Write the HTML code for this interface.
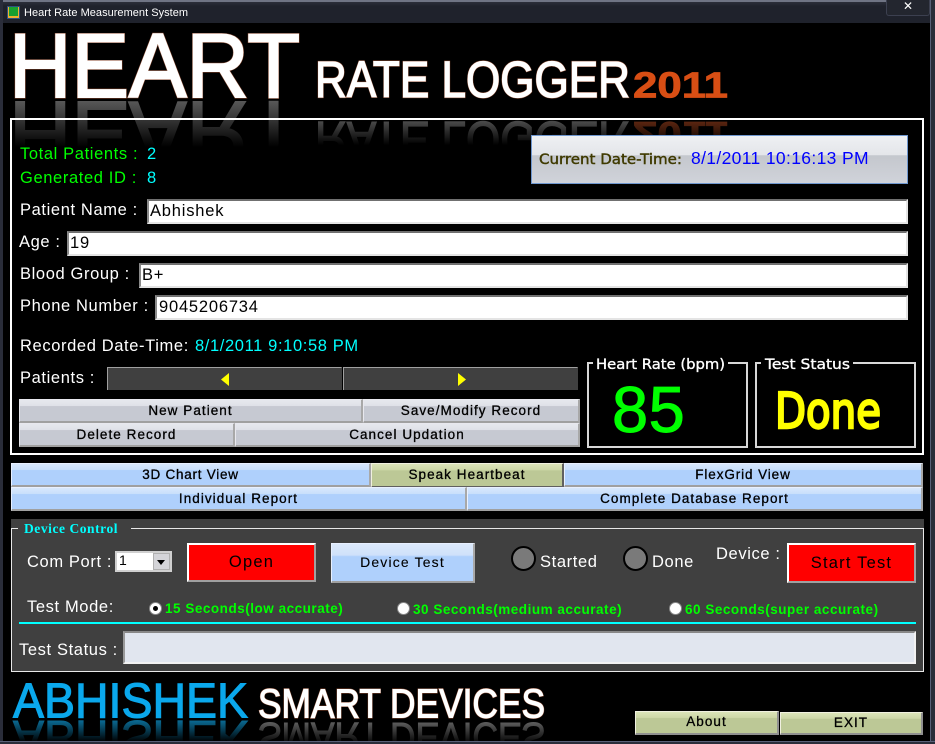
<!DOCTYPE html>
<html><head><meta charset="utf-8"><title>Heart Rate Measurement System</title>
<style>
html,body{margin:0;padding:0;background:#000}
#w{position:relative;width:935px;height:744px;overflow:hidden;background:#000;font-family:"Liberation Sans",sans-serif;font-size:16px}
#w div{position:absolute;box-sizing:border-box}
.l{color:#fff;white-space:nowrap;line-height:18px;height:18px;letter-spacing:.62px;font-size:16.5px;margin-top:1px}
.g{color:#00ff00}.c{color:#00ffff}
.i{background:#fff;border:2px solid #e4e4e4;border-top-color:#707070;border-left-color:#8a8a8a;color:#000;padding-left:1px;line-height:21px;letter-spacing:.8px;font-size:16.5px}
.b{text-align:center;color:#000;font-size:13.5px;line-height:21px;letter-spacing:1.05px;border:2px solid #fff;border-right-color:#909090;border-bottom-color:#909090;border-width:1px 2px 2px 1px;-webkit-text-stroke:.3px #000}
.s{background:linear-gradient(#e6e8ee 0,#dfe1e8 28%,#c6c9d2 30%,#c6c9d2 100%);border-color:#e8e8ee #a8a8a8 #a0a0a0 #e8e8ee}
.u{background:linear-gradient(#d8e8fc 0,#c8dffb 28%,#afd0fc 30%,#afd0fc 100%);border-color:#e8f0ff #a8a8a8 #a0a0a0 #e8f0ff}
.v{background:linear-gradient(#dbe4b8 0,#ccd6a6 28%,#bcc896 30%,#bcc896 100%);border-color:#f0f0e0 #909090 #909090 #f0f0e0}
.r{background:#ff0000;border:2px solid #fff;border-right-color:#a0a0a0;border-bottom-color:#a0a0a0;text-align:center;color:#000;letter-spacing:1.2px;line-height:34px;font-size:16.5px}
.n{background:#404040;border:2px solid #a0a0a0;border-right-color:#404040;border-bottom-color:#404040;border-width:1px 1px 0 1px}
.o{width:13px;height:13px;border-radius:50%;background:#fff;border:1px solid #888}
.t{color:#00ff00;font-size:13.5px;font-weight:bold;letter-spacing:.52px;white-space:nowrap;line-height:16px}
.d{width:25px;height:25px;border-radius:50%;background:#7a7a7a;border:2px solid #000}
svg{position:absolute;left:0;top:0}
</style></head><body><div id="w">
<!-- window chrome -->
<div style="left:0;top:0;width:935px;height:23px;background:linear-gradient(#2b2e3a,#1f222c 20%,#1f222c);border-top:2px solid #6f7484"></div>
<div style="left:0;top:0;width:3px;height:744px;background:#2a2d3a"></div>
<div style="left:930px;top:0;width:5px;height:744px;background:#2a2d3a;border-left:1px solid #596078"></div>
<div style="left:7px;top:6px;width:13px;height:13px;background:#f0b030;border:1px solid #305080"></div>
<div style="left:9px;top:7px;width:9px;height:9px;background:#18a030"></div>
<div style="left:24px;top:6px;color:#fff;font-size:11px;line-height:15px;letter-spacing:.03px;white-space:nowrap">Heart Rate Measurement System</div>
<div style="left:886px;top:0;width:44px;height:16px;background:#23262f;border:1px solid #3c4050;border-top:0;border-radius:0 0 3px 3px;color:#fff;font:bold 12px/12px 'DejaVu Sans',sans-serif;text-align:center">✕</div>

<!-- top logo -->
<svg width="935" height="200" viewBox="0 0 935 200" xmlns="http://www.w3.org/2000/svg" font-family="Liberation Sans, sans-serif">
<defs>
<linearGradient id="r1" gradientUnits="userSpaceOnUse" x1="0" y1="98" x2="0" y2="52"><stop offset="0" stop-color="#585858"/><stop offset="1" stop-color="#000"/></linearGradient>
<linearGradient id="r2" gradientUnits="userSpaceOnUse" x1="0" y1="98" x2="0" y2="75"><stop offset="0" stop-color="#484848"/><stop offset="1" stop-color="#000"/></linearGradient>
<linearGradient id="r3" gradientUnits="userSpaceOnUse" x1="0" y1="98" x2="0" y2="75"><stop offset="0" stop-color="#5a2510"/><stop offset="1" stop-color="#000"/></linearGradient>
</defs>
<g transform="translate(0,199) scale(1,-1)">
<text x="9" y="97" font-size="91" textLength="291" lengthAdjust="spacingAndGlyphs" fill="url(#r1)" stroke="url(#r1)" stroke-width="2">HEART</text>
</g>
<g transform="translate(0,220) scale(1,-1)">
<text x="315" y="98" font-size="51" textLength="315" lengthAdjust="spacingAndGlyphs" fill="url(#r2)" stroke="url(#r2)" stroke-width="1.4">RATE LOGGER</text>
<text x="633" y="98" font-size="36" font-weight="bold" textLength="95" lengthAdjust="spacingAndGlyphs" fill="url(#r3)" stroke="url(#r3)" stroke-width=".8">2011</text>
</g>
<text x="9" y="97" font-size="91" textLength="291" lengthAdjust="spacingAndGlyphs" fill="#8a4a30" stroke="#8a4a30" stroke-width="3">HEART</text>
<text x="9" y="97" font-size="91" textLength="291" lengthAdjust="spacingAndGlyphs" fill="#fff" stroke="#fff" stroke-width="2">HEART</text>
<text x="315" y="97" font-size="51" textLength="315" lengthAdjust="spacingAndGlyphs" fill="#8a4a30" stroke="#8a4a30" stroke-width="2.2">RATE LOGGER</text>
<text x="315" y="97" font-size="51" textLength="315" lengthAdjust="spacingAndGlyphs" fill="#fff" stroke="#fff" stroke-width="1.3">RATE LOGGER</text>
<text x="633" y="97.5" font-size="36" font-weight="bold" textLength="95" lengthAdjust="spacingAndGlyphs" fill="#d84e14" stroke="#d84e14" stroke-width=".8">2011</text>
</svg>

<!-- main frame -->
<div style="left:10px;top:118px;width:914px;height:337px;border:2px solid #fff"></div>

<div class="l g" style="left:20px;top:144px">Total Patients :</div>
<div class="l c" style="left:147px;top:144px">2</div>
<div class="l g" style="left:20px;top:168px">Generated ID :</div>
<div class="l c" style="left:147px;top:168px">8</div>

<div style="left:531px;top:135px;width:377px;height:49px;background:linear-gradient(#eef0f3 0,#e4e6ea 40%,#c4c7cd 42%,#d0d3da 100%);border:1px solid #6f97cf"></div>
<div style="left:691px;top:148px;color:#0000ff;font-size:17.5px;line-height:20px;letter-spacing:.35px;white-space:nowrap">8/1/2011 10:16:13 PM</div>

<div class="l" style="left:20px;top:200px">Patient Name :</div>
<div class="i" style="left:147px;top:199px;width:761px;height:25px">Abhishek</div>
<div class="l" style="left:19px;top:232px">Age :</div>
<div class="i" style="left:67px;top:231px;width:841px;height:25px">19</div>
<div class="l" style="left:20px;top:264px">Blood Group :</div>
<div class="i" style="left:139px;top:263px;width:769px;height:25px">B+</div>
<div class="l" style="left:20px;top:296px">Phone Number :</div>
<div class="i" style="left:155px;top:295px;width:753px;height:25px;padding-left:2px">9045206734</div>

<div class="l" style="left:20px;top:336px">Recorded Date-Time:</div>
<div class="l c" style="left:195px;top:336px">8/1/2011 9:10:58 PM</div>
<div class="l" style="left:20px;top:368px">Patients :</div>
<div class="n" style="left:107px;top:367px;width:235px;height:23px"></div>
<div class="n" style="left:343px;top:367px;width:235px;height:23px"></div>

<div class="b s" style="left:19px;top:399px;width:344px;height:24px">New Patient</div>
<div class="b s" style="left:363px;top:399px;width:217px;height:24px">Save/Modify Record</div>
<div class="b s" style="left:19px;top:423px;width:216px;height:24px">Delete Record</div>
<div class="b s" style="left:235px;top:423px;width:345px;height:24px">Cancel Updation</div>

<div style="left:587px;top:362px;width:161px;height:86px;border:2px solid #d8d8d8"></div>
<div style="left:755px;top:362px;width:161px;height:86px;border:2px solid #d8d8d8"></div>
<div style="left:593px;top:355px;width:135px;height:16px;background:#000"></div>
<div style="left:761px;top:355px;width:92px;height:16px;background:#000"></div>
<div style="left:612px;top:375px;color:#00ff00;font-size:65px;line-height:70px;white-space:nowrap;letter-spacing:.5px;-webkit-text-stroke:1px #00ff00">85</div>

<div class="b u" style="left:11px;top:463px;width:360px;height:24px;letter-spacing:.75px">3D Chart View</div>
<div class="b v" style="left:371px;top:463px;width:193px;height:25px;border-right-color:#606060;border-bottom-color:#606060">Speak Heartbeat</div>
<div class="b u" style="left:564px;top:463px;width:359px;height:24px;letter-spacing:.9px">FlexGrid View</div>
<div class="b u" style="left:11px;top:487px;width:456px;height:24px">Individual Report</div>
<div class="b u" style="left:467px;top:487px;width:456px;height:24px">Complete Database Report</div>

<!-- device panel -->
<div style="left:11px;top:519px;width:913px;height:153px;background:#404040"></div>
<div style="left:11px;top:528px;width:913px;height:144px;border:1px solid #e8e8e8"></div>
<div style="left:18px;top:520px;width:113px;height:18px;background:#404040"></div>
<div style="left:24px;top:521px;color:#00ffff;font:bold 13.5px/16px 'Liberation Serif',serif;letter-spacing:.55px;white-space:nowrap">Device Control</div>

<div class="l" style="left:27px;top:552px">Com Port :</div>
<div style="left:115px;top:551px;width:57px;height:21px;background:#fff;border:2px solid #d0d0d0;color:#000;font-size:14px;line-height:15px;padding-left:2px">1</div>
<div style="left:153px;top:553px;width:17px;height:17px;background:#d4d4d8;border:1px solid #b0b0b0"></div>
<div style="left:157px;top:560px;width:0;height:0;border:4px solid transparent;border-top:5px solid #000;border-bottom:0"></div>
<div class="r" style="left:187px;top:543px;width:129px;height:39px">Open</div>
<div class="b u" style="left:331px;top:543px;width:144px;height:40px;font-size:14px;line-height:36px;letter-spacing:1.15px;-webkit-text-stroke:.1px #000;background:linear-gradient(#dce9fb 0,#cfe1fa 30%,#afd0fc 34%,#afd0fc 100%)">Device Test</div>
<div class="d" style="left:511px;top:546px"></div>
<div class="l" style="left:540px;top:552px">Started</div>
<div class="d" style="left:623px;top:546px"></div>
<div class="l" style="left:652px;top:552px">Done</div>
<div class="l" style="left:716px;top:544px">Device :</div>
<div class="r" style="left:787px;top:543px;width:129px;height:40px;line-height:36px">Start Test</div>

<div class="l" style="left:27px;top:597px">Test Mode:</div>
<div class="o" style="left:149px;top:602px"></div>
<div style="left:153px;top:606px;width:5px;height:5px;border-radius:50%;background:#000"></div>
<div class="t" style="left:165px;top:601px">15 Seconds(low accurate)</div>
<div class="o" style="left:397px;top:602px"></div>
<div class="t" style="left:413px;top:602px">30 Seconds(medium accurate)</div>
<div class="o" style="left:669px;top:602px"></div>
<div class="t" style="left:685px;top:602px">60 Seconds(super accurate)</div>
<div style="left:19px;top:622px;width:897px;height:2px;background:#00ffff"></div>
<div class="l" style="left:19px;top:640px">Test Status :</div>
<div style="left:123px;top:631px;width:793px;height:33px;background:#e1e6ef;border:2px solid #f2f2f2;border-top-color:#888;border-left-color:#999"></div>

<div class="b v" style="left:635px;top:711px;width:144px;height:24px;line-height:20px">About</div>
<div class="b v" style="left:780px;top:712px;width:143px;height:23px;line-height:20px">EXIT</div>

<svg width="935" height="744" viewBox="0 0 935 744" xmlns="http://www.w3.org/2000/svg" font-family="Liberation Sans, sans-serif">
<defs>
<linearGradient id="r4" gradientUnits="userSpaceOnUse" x1="0" y1="718" x2="0" y2="697"><stop offset="0" stop-color="#0a6890"/><stop offset="1" stop-color="#000"/></linearGradient>
<linearGradient id="r5" gradientUnits="userSpaceOnUse" x1="0" y1="718" x2="0" y2="697"><stop offset="0" stop-color="#5a5a5a"/><stop offset="1" stop-color="#000"/></linearGradient>
</defs>
<g transform="translate(0,1439) scale(1,-1)">
<text x="13" y="718" font-size="49" textLength="235" lengthAdjust="spacingAndGlyphs" fill="url(#r4)" stroke="url(#r4)" stroke-width="1">ABHISHEK</text>
</g>
<g transform="translate(0,1441) scale(1,-1)">
<text x="258" y="718" font-size="41" textLength="287" lengthAdjust="spacingAndGlyphs" fill="url(#r5)" stroke="url(#r5)" stroke-width="1">SMART DEVICES</text>
</g>
<text x="13" y="717.5" font-size="49" textLength="235" lengthAdjust="spacingAndGlyphs" fill="#0aa8ec" stroke="#0aa8ec" stroke-width="1.1">ABHISHEK</text>
<text x="258" y="717.5" font-size="41" textLength="287" lengthAdjust="spacingAndGlyphs" fill="#8a4a30" stroke="#8a4a30" stroke-width="1.9">SMART DEVICES</text>
<text x="258" y="717.5" font-size="41" textLength="287" lengthAdjust="spacingAndGlyphs" fill="#fff" stroke="#fff" stroke-width="1">SMART DEVICES</text>
<!-- comic style text -->
<g font-family="DejaVu Sans, sans-serif">
<text x="539" y="164" font-size="14" textLength="143" lengthAdjust="spacingAndGlyphs" fill="#3f3a00" stroke="#3f3a00" stroke-width=".4">Current Date-Time:</text>
<text x="596" y="369" font-size="14.5" textLength="129" lengthAdjust="spacingAndGlyphs" fill="#fff" stroke="#fff" stroke-width=".35">Heart Rate (bpm)</text>
<text x="765" y="369" font-size="14.5" textLength="85" lengthAdjust="spacingAndGlyphs" fill="#fff" stroke="#fff" stroke-width=".35">Test Status</text>
<text x="775" y="428" font-size="49" textLength="106" lengthAdjust="spacingAndGlyphs" fill="#ffff00" stroke="#ffff00" stroke-width="2.4">Done</text>
</g>
<polygon points="229,373 229,386 221,379.5" fill="#ffff00"/>
<polygon points="458,373 458,386 466,379.5" fill="#ffff00"/>
</svg>
<div style="left:0;top:741px;width:935px;height:3px;background:#2a2d3a;border-top:1px solid #596078"></div>
</div></body></html>
